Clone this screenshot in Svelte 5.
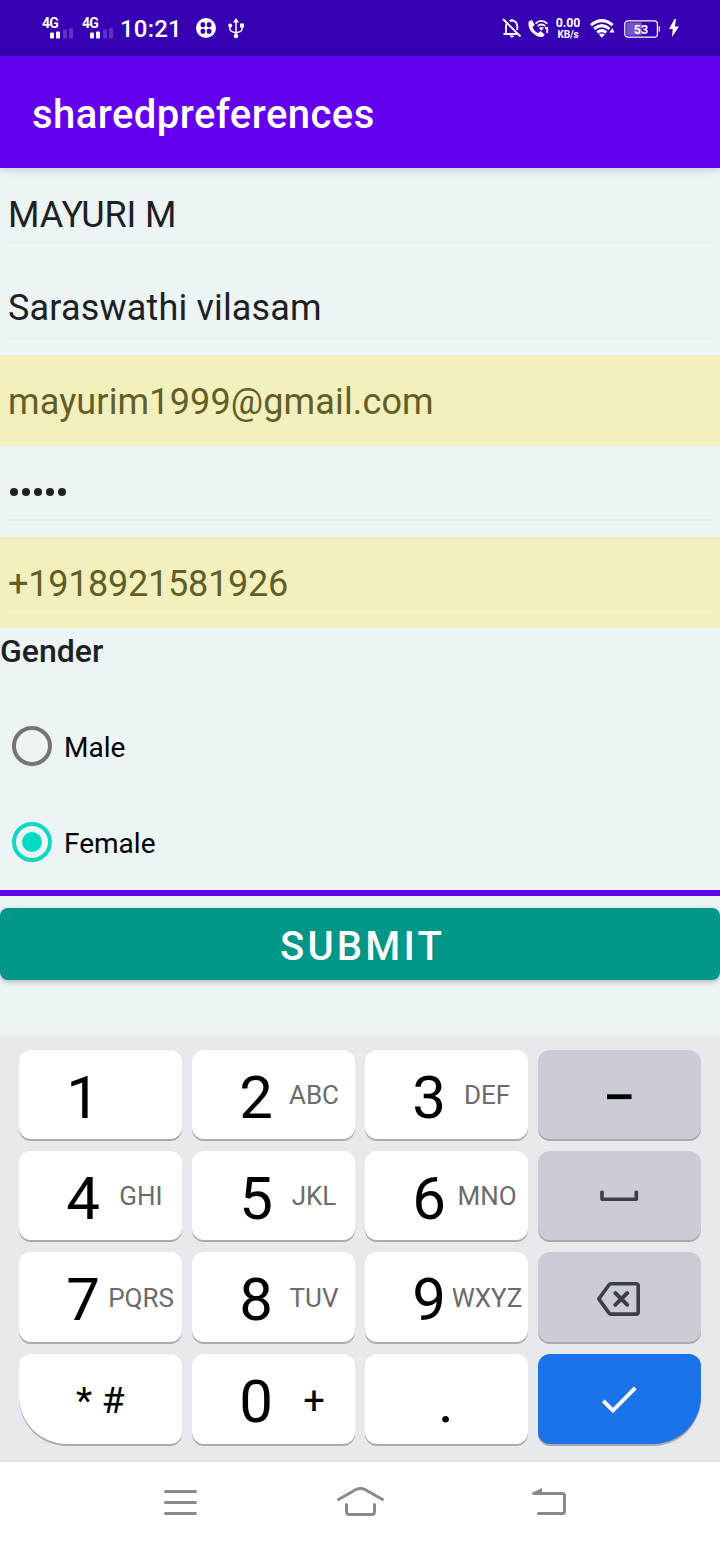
<script>
  const keys = [
    { d: '1' }, { d: '2', l: 'ABC' }, { d: '3', l: 'DEF' }, { kind: 'dash' },
    { d: '4', l: 'GHI' }, { d: '5', l: 'JKL' }, { d: '6', l: 'MNO' }, { kind: 'space' },
    { d: '7', l: 'PQRS' }, { d: '8', l: 'TUV' }, { d: '9', l: 'WXYZ' }, { kind: 'delete' },
    { kind: 'symbols' }, { d: '0', l: '+', plus: true }, { kind: 'dot' }, { kind: 'enter' }
  ];
</script>

<div class="screen">
  <header class="status">
    {#each [0, 1] as n}
      <div class="signal">
        <span>4G</span>
        <svg width="25" height="12" viewBox="0 0 25 12">
          <rect x="0" y="4.5" width="4" height="6" rx="1" fill="#fff" />
          <rect x="6" y="3.5" width="4" height="7" rx="1" fill="#fff" />
          <rect x="13" y="1.5" width="4" height="9" rx="1" fill="#fff" opacity=".2" />
          <rect x="19" y="0" width="4" height="10.5" rx="1" fill="#fff" opacity=".2" />
        </svg>
      </div>
    {/each}
    <span class="clock">10:21</span>
    <svg class="app" width="20" height="20" viewBox="0 0 20 20">
      <circle cx="10" cy="10" r="10" fill="#fff" />
      <g fill="#3700b3">
        <rect x="4.6" y="4.2" width="4.6" height="5" rx="1.7" />
        <rect x="10.8" y="4.2" width="4.6" height="5" rx="1.7" />
        <rect x="4.6" y="10.8" width="4.6" height="5" rx="1.7" />
        <rect x="10.8" y="10.8" width="4.6" height="5" rx="1.7" />
      </g>
    </svg>
    <svg class="usb" width="16" height="21" viewBox="0 0 16 21">
      <path d="M8 3v15M2 8v3q0 2 2 2.6L8 15M14 7v4q0 2-2 2.6L8 15" fill="none" stroke="#fff" stroke-width="1.5" />
      <path d="M8 0l3 4.5H5z" fill="#fff" />
      <circle cx="8" cy="18" r="2.3" fill="#fff" />
      <circle cx="2.2" cy="7.6" r="2" fill="#fff" />
      <rect x="12" y="5.5" width="4" height="4" fill="#fff" />
    </svg>
    <svg class="bell" width="20" height="20" viewBox="0 0 20 20">
      <g fill="none" stroke="#fff" stroke-width="1.8">
        <path d="M4 15.2V8.3Q4 6 5.6 4.5M7.7 3.2Q10 1.8 12.6 3.3Q15.3 5 15.3 8.3V12M1.5 16H15.5" />
        <path d="M1 1l17.5 17.5" />
      </g>
      <path d="M7.5 17.5h4.8q-.6 2-2.4 2t-2.4-2zM8.8 1.2h2.2v2H8.8z" fill="#fff" />
    </svg>
    <svg class="call" width="21" height="19" viewBox="0 0 21 19">
      <path d="M.8 2.2L4 1l2.7 5-2.3 2.3q1.8 4 5.6 6l2.5-2.2 4.2 3.3-1.5 2.3q-3 1.2-7.2-1.3Q1 12 .5 6 .4 3.8.8 2.2z" fill="#fff" />
      <g fill="none" stroke="#fff" stroke-width="1.8">
        <path d="M7.5 4.6q5.6-5.4 11.8 0M9.7 7.1q3.8-3.2 7.6 0" />
        <path d="M17 9h2.2v5" />
      </g>
      <path d="M11 9q2.4-2 4.8 0l-2.4 2.8z" fill="#fff" />
    </svg>
    <div class="rate"><b>0.00</b><b class="unit">KB/s</b></div>
    <svg class="wifi" width="25" height="19" viewBox="0 0 25 19">
      <g fill="none" stroke="#fff" stroke-width="3">
        <path d="M1 6.2Q11.8-3 22.7 6.2M4.1 9.9q7.7-6.5 15.4 0M7.3 13.5q4.5-3.8 9 0" />
      </g>
      <path d="M8.9 15.6q3-2.2 5.9 0l-3 3.2zM22.3 9l2.2 4.5H19.4z" fill="#fff" />
    </svg>
    <svg class="battery" width="37" height="18" viewBox="0 0 37 18">
      <rect x=".8" y=".8" width="32.6" height="16.4" rx="3.2" fill="none" stroke="#fff" stroke-width="1.2" />
      <rect x="2.4" y="2.4" width="15.6" height="13.2" rx="1.5" fill="#7955cc" />
      <path d="M35.3 6.5v5" stroke="#fff" stroke-width="1.2" />
      <text x="17" y="13.9" text-anchor="middle">53</text>
    </svg>
    <svg class="bolt" width="10" height="18" viewBox="0 0 10 18">
      <path d="M5.5 0L0 10h3.7L3 18l7-10.6H5.9L7 0z" fill="#fff" />
    </svg>
  </header>

  <div class="appbar"><h1>sharedpreferences</h1></div>

  <main>
    <div class="field name"><span>MAYURI M</span></div>
    <div class="field address"><span>Saraswathi vilasam</span></div>
    <div class="field filled email"><span>mayurim1999@gmail.com</span></div>
    <div class="field password">
      <i></i><i></i><i></i><i></i><i></i>
    </div>
    <div class="field filled phone"><span>+1918921581926</span></div>
    <div class="gender">Gender</div>
    <div class="radio"><span class="ring"></span><span class="label">Male</span></div>
    <div class="radio"><span class="ring on"></span><span class="label">Female</span></div>
    <div class="rule"></div>
    <button>SUBMIT</button>
  </main>

  <section class="keyboard">
    {#each keys as k}
      <div class="key {k.kind ?? 'digit'}">
        {#if k.d}
          <span class="num">{k.d}</span>
          {#if k.l}<span class={k.plus ? 'plus' : 'letters'}>{k.l}</span>{/if}
        {:else if k.kind === 'dash'}
          <svg width="163" height="89" viewBox="0 0 163 89"><path d="M69 46.7h24.5" stroke="#000" stroke-width="4.8" /></svg>
        {:else if k.kind === 'space'}
          <svg width="163" height="89" viewBox="0 0 163 89">
            <path d="M64 41.5v6.8h34.3v-6.8" fill="none" stroke="#3c4043" stroke-width="3.6" stroke-linejoin="round" stroke-linecap="square" />
          </svg>
        {:else if k.kind === 'delete'}
          <svg width="163" height="90" viewBox="0 0 163 90">
            <g fill="none" stroke="#3c4043" stroke-width="3.6" stroke-linecap="round" stroke-linejoin="round">
              <path d="M73 31.7h25q2.2 0 2.2 2.2v26q0 2.2-2.2 2.2H73q-1.2 0-1.9-1L60.8 46.9l10.3-14.2q.7-1 1.9-1z" />
              <path d="M77.3 41l12 11.8M89.3 41l-12 11.8" stroke-width="3.9" />
            </g>
          </svg>
        {:else if k.kind === 'symbols'}
          <span class="sym">* #</span>
        {:else if k.kind === 'dot'}
          <span class="num">.</span>
        {:else}
          <svg width="163" height="90" viewBox="0 0 163 90">
            <path d="M65.3 46.8l9.6 9.7L97.3 33.8" fill="none" stroke="#fff" stroke-width="3.9" />
          </svg>
        {/if}
      </div>
    {/each}
  </section>

  <nav>
    <svg width="720" height="82" viewBox="0 0 720 82">
      <g fill="none" stroke="#8a8a8a" stroke-width="3" stroke-linecap="round" stroke-linejoin="round">
        <path d="M165.5 29.5h30M165.5 40.5h30M165.5 51.5h30" />
        <path d="M338.5 37.5l17.5-10q4.5-2 9 0l17.5 10M346.5 42.5v7q0 3 3 3h22q3 0 3-3v-7" />
        <path d="M534 31.5h28.5q2 0 2 2v16q0 2-2 2h-24" />
      </g>
      <path d="M532 32.5v-1.8L542 26v6.5z" fill="#8a8a8a" />
    </svg>
  </nav>
</div>

<style>
  :global(body) { margin: 0; }
  * { box-sizing: border-box; }
  .screen {
    width: 720px; height: 1544px; display: flex; flex-direction: column;
    background: #ecf4f6; font-family: Roboto, sans-serif; overflow: hidden;
  }
  svg { display: block; flex: none; }

  .status { height: 56px; flex: none; background: #3700b3; color: #fff; display: flex; align-items: center; padding-left: 42px; }
  .signal { width: 40px; display: flex; flex-direction: column; }
  .signal span { font-size: 14px; font-weight: 700; line-height: 12px; letter-spacing: -.8px; }
  .signal svg { margin: -1px 0 0 8px; }
  .clock { width: 73px; font-size: 24px; font-weight: 500; line-height: 28px; letter-spacing: .2px; margin-left: -2px; margin-top: 1px; }
  .app { margin-left: 3px; }
  .usb { margin-left: 12px; }
  .bell { margin-left: 258px; }
  .call { margin-left: 6px; }
  .rate { width: 26px; margin-left: 6px; display: flex; flex-direction: column; align-items: center; font-size: 12.3px; line-height: 13px; margin-top: -1px; }
  .rate .unit { font-size: 10px; line-height: 9px; letter-spacing: -.1px; }
  .wifi { margin-left: 9px; }
  .battery { margin-left: 9px; margin-top: 2px; }
  .battery text { font: 700 12.5px Roboto, sans-serif; fill: #fff; }
  .bolt { margin-left: 8px; }

  .appbar {
    height: 112px; flex: none; background: #6200ee; color: #fff; display: flex; align-items: center;
    padding: 6px 32px 0; box-shadow: 0 2px 8px rgba(0, 0, 0, .16);
  }
  h1 { margin: 0; font-size: 40px; line-height: 48px; font-weight: 500; letter-spacing: .44px; }

  main { height: 868px; flex: none; display: flex; flex-direction: column; }
  .field { flex: none; padding: 0 8px; font-size: 36px; line-height: 42px; letter-spacing: .17px; color: #1e2122; white-space: nowrap; }
  .field::after { content: ''; display: block; height: 2px; background: #e8eef0; }
  .field span { display: block; }
  .name { height: 92px; padding-top: 26px; letter-spacing: -.1px; }
  .name::after { margin-top: 5px; }
  .address { height: 95px; padding-top: 27px; }
  .address::after { margin-top: 8px; }
  .filled { height: 91px; background: #f2f0bd; color: #635d27; padding-top: 26px; }
  .filled::after { background: #f2efbd; margin-top: 5px; }
  .email { letter-spacing: .14px; }
  .phone { letter-spacing: -.25px; }
  .phone::after { height: 4px; background: #f7f4c6; }
  .password { height: 91px; display: flex; flex-wrap: wrap; align-content: flex-start; gap: 4px; padding: 41.5px 8px 0 10px; }
  .password i { width: 8px; height: 8px; border-radius: 50%; background: #1e2122; }
  .password::after { width: 704px; flex: none; margin: 19px 0 0 -2px; }
  .gender { height: 70px; flex: none; padding-top: 4px; font-size: 32px; line-height: 38px; font-weight: 500; color: #1e2122; }
  .radio { height: 96px; flex: none; display: flex; align-items: center; padding-left: 12px; gap: 12px; font-size: 28px; color: #000; }
  .label { margin-top: 2px; }
  .ring { width: 40px; height: 40px; border: 4px solid #757575; border-radius: 50%; display: grid; place-items: center; }
  .ring.on { border-color: #12d6c4; }
  .ring.on::after { content: ''; width: 20px; height: 20px; border-radius: 50%; background: #03dac5; }
  .rule { height: 6px; flex: none; background: #6200ee; }
  button {
    height: 72px; flex: none; margin-top: 12px; border: 0; border-radius: 8px; background: #009688; color: #fff;
    font: 500 40px/48px Roboto, sans-serif; letter-spacing: 3.2px; padding: 6px 0 0 5px; box-shadow: 0 2px 5px rgba(0, 0, 0, .24);
  }

  .keyboard {
    height: 426px; flex: none; padding: 14px 19px 0; background: #e8e9ed; border-bottom: 2px solid #e0e0e2;
    display: grid; grid-template-columns: repeat(4, 163px); grid-template-rows: 89px 89px 90px 90px; gap: 12px 10px; align-content: start;
    box-shadow: 0 -1px 3px rgba(0, 0, 0, .05);
  }
  .key { background: #fff; border-radius: 12px; box-shadow: 0 2px 0 #a8aaad; display: grid; align-items: center; }
  .digit, .dot { grid-template-columns: 30px 68px 48px; justify-items: center; white-space: nowrap; }
  .num { grid-column: 2; font-size: 60px; line-height: 60px; margin-top: 6px; }
  .letters { grid-column: 3; font-size: 26px; margin-top: 1px; color: #6b6b6b; }
  .plus { grid-column: 3; font-size: 38px; margin-top: 4px; }
  .dot .num { margin-left: 34px; }
  .dash, .space, .delete { background: #cacdd5; }
  .symbols { border-bottom-left-radius: 48px; }
  .sym { padding-left: 57px; padding-top: 2px; font-size: 37.5px; }
  .enter { background: #1a73e8; border-bottom-right-radius: 48px; }

  nav { height: 82px; flex: none; background: #fff; }
</style>
